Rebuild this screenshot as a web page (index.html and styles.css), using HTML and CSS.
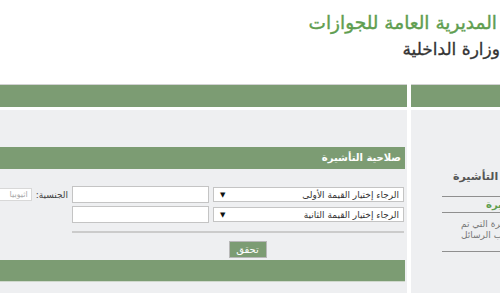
FILE: index.html
```html
<!DOCTYPE html>
<html lang="ar">
<head>
<meta charset="UTF-8" />
<meta name="viewport" content="width=device-width, initial-scale=1" />
<title>المديرية العامة للجوازات</title>
<link rel="stylesheet" href="styles.css">
</head>
<body>

<div id="page">

  <header class="top">
    <div class="brand">
      <div class="brand-title">المديرية العامة للجوازات</div>
      <div class="brand-sub">وزارة الداخلية</div>
    </div>
  </header>

  <div class="main">

    <div class="col-left">
      <div class="bar"></div>
      <div class="panel">
        <div class="section-title">صلاحية التأشيرة</div>

        <div class="form">
          <div class="row">
            <div class="select"><span>الرجاء إختيار القيمة الأولى</span><span class="arrow">▼</span></div>
            <input class="text" type="text" />
            <label class="label">الجنسية:</label>
            <input class="small" type="text" value="اثيوبيا" disabled />
          </div>
          <div class="row">
            <div class="select"><span>الرجاء إختيار القيمة الثانية</span><span class="arrow">▼</span></div>
            <input class="text" type="text" />
          </div>
          <div class="rule"></div>
          <div class="actions">
            <button class="check">تحقق</button>
          </div>
        </div>

        <div class="bar footer-bar"></div>
      </div>
    </div>

    <div class="col-right">
      <div class="bar"></div>
      <div class="panel side">
        <div class="side-box">
          <h3 class="side-title">صلاحية التأشيرة</h3>
          <div class="side-link">صلاحية التأشيرة</div>
          <div class="side-text">
            <span>للاستعلام عن التأشيرة التي تم</span>
            <span>إصدارها يرجى طلب الرسائل</span>
          </div>
        </div>
      </div>
    </div>

  </div>

</div>

</body>
</html>
```

FILE: styles.css
```css
body {
  margin: 0;
  font-family: "DejaVu Sans", Tahoma, sans-serif;
  background: #fff;
  overflow: hidden;
}

#page {
  width: 500px;
  overflow: hidden;
}

/* Header */
.top {
  height: 84px;
  display: flex;
  justify-content: flex-end;
}

.brand {
  direction: rtl;
  padding: 9px 3px 0 0;
}

.brand-title {
  color: #5f9e50;
  font-size: 18.5px;
  line-height: 27px;
  -webkit-text-stroke: 0.4px #5f9e50;
}

.brand-sub {
  color: #333;
  font-size: 17px;
  line-height: 26px;
  margin-right: -3px;
  -webkit-text-stroke: 0.3px #333;
}

/* Columns */
.main {
  display: flex;
  gap: 4px;
}

.col-left {
  width: 407px;
  flex-shrink: 0;
}

.col-right {
  flex: 1;
  overflow: hidden;
}

.bar {
  height: 22px;
  background: #7c9c73;
  border-top: 1px solid #d2d2d2;
}

.panel {
  margin-top: 3px;
  background: #eeeff1;
  padding: 37px 0 11px;
}

.section-title {
  direction: rtl;
  width: 405px;
  height: 22px;
  line-height: 22px;
  background: #7c9c73;
  color: #fff;
  font-size: 10px;
  font-weight: bold;
  padding-right: 4px;
  box-sizing: border-box;
}

/* Form */
.form {
  padding-top: 17px;
}

.row {
  direction: rtl;
  display: flex;
  align-items: center;
  gap: 4px;
  padding-right: 3px;
  margin-bottom: 3px;
  height: 17px;
}

.select {
  flex-shrink: 0;
  width: 191px;
  height: 15px;
  box-sizing: border-box;
  background: #fff;
  border: 1px solid #c4c4c4;
  display: flex;
  justify-content: space-between;
  align-items: center;
  padding: 0 4px 0 6px;
  font-size: 9px;
  color: #333;
}

.arrow {
  font-size: 7px;
  color: #111;
}

.text {
  flex-shrink: 0;
  width: 137px;
  height: 17px;
  box-sizing: border-box;
  margin: 0;
  border: 1px solid #c4c4c4;
  background: #fff;
}

.label {
  flex-shrink: 0;
  font-size: 9px;
  color: #444;
}

.small {
  flex-shrink: 0;
  width: 40px;
  height: 13px;
  box-sizing: border-box;
  margin: 0;
  border: 1px solid #d8d8d8;
  background: #fff;
  color: #aaa;
  font-family: inherit;
  font-size: 8px;
  padding: 0 3px;
  direction: rtl;
}

.rule {
  height: 2px;
  background: #cbcbcb;
  margin: 8px 3px 0 72px;
}

.actions {
  display: flex;
  justify-content: center;
  padding-left: 88px;
  margin-top: 8px;
}

.check {
  width: 38px;
  height: 17px;
  background: #7c9c73;
  border: 1px solid #b8b8b8;
  color: #fff;
  font-family: inherit;
  font-size: 10px;
  padding: 0;
  cursor: pointer;
}

.footer-bar {
  width: 405px;
  margin-top: 2px;
  border-top: none;
  border-bottom: 1px solid #cfd8cc;
  height: 21px;
}

/* Side column */
.side {
  padding: 58px 0 0;
  height: 125px;
}

.side-box {
  margin-left: 31px;
  width: 240px;
  direction: rtl;
  text-align: left;
  white-space: nowrap;
}

.side-title {
  margin: 0;
  padding-left: 11px;
  font-size: 11px;
  line-height: 18px;
  color: #555;
  border-bottom: 1px solid #8f8f8f;
  padding-bottom: 10px;
}

.side-link {
  padding-left: 44px;
  font-size: 10px;
  font-weight: bold;
  line-height: 15px;
  color: #5f9e50;
  border-bottom: 1px solid #8f8f8f;
}

.side-text {
  padding: 6px 0 10px 19px;
  font-size: 9px;
  line-height: 11px;
  color: #777;
  border-bottom: 1px solid #8f8f8f;
}

.side-text span {
  display: block;
}
```
